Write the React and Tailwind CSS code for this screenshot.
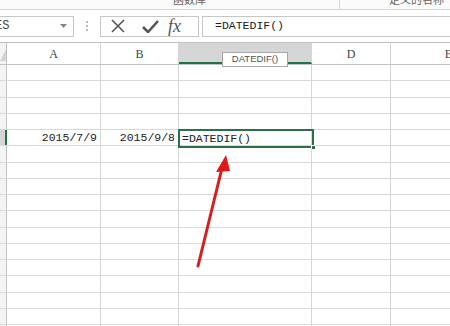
const cols = [
  { key: "A", w: "w-[94px]" },
  { key: "B", w: "w-[78px]" },
  { key: "C", w: "w-[133px]" },
  { key: "D", w: "w-[79px]" },
  { key: "E", w: "w-[116px]" },
];

const rows = Array.from({ length: 17 }, (_, i) => i);

const App = () => {
  return (
    <div className="relative w-[450px] h-[326px] overflow-hidden bg-white font-['Liberation_Sans',sans-serif]">
      {/* ribbon strip */}
      <div className="flex h-[10px] border-b border-[#d6d6d6] bg-[#fbfbfb] overflow-hidden text-[11px] text-[#666] font-['Noto_Sans_CJK_SC',sans-serif] leading-none">
        <div className="w-[340px] border-r border-[#d6d6d6] flex justify-center pl-[40px]">
          <span className="-mt-[6px]">函数库</span>
        </div>
        <div className="flex-1 flex justify-end pr-[6px]">
          <span className="-mt-[6px]">定义的名称</span>
        </div>
      </div>

      {/* formula bar */}
      <div className="flex items-center h-[32px] gap-0">
        <div className="w-[74px] h-[21px] border border-l-0 border-[#c6c6c6] flex items-center overflow-hidden">
          <span className="-ml-[5px] text-[12px] text-[#444] font-['Liberation_Mono',monospace]">ES</span>
          <svg className="ml-auto mr-[6px]" width="7" height="5" viewBox="0 0 7 5">
            <path d="M0 0 L7 0 L3.5 4 Z" fill="#888" />
          </svg>
        </div>
        <div className="w-[26px] flex justify-center">
          <div className="flex flex-col gap-[2px]">
            <span className="block w-[2px] h-[2px] bg-[#bbb]" />
            <span className="block w-[2px] h-[2px] bg-[#bbb]" />
            <span className="block w-[2px] h-[2px] bg-[#bbb]" />
          </div>
        </div>
        <div className="w-[99px] h-[21px] border border-[#c6c6c6] flex items-center">
          <svg className="ml-[10px]" width="14" height="14" viewBox="0 0 14 14">
            <path d="M1 1 L13 13 M13 1 L1 13" stroke="#555" strokeWidth="1.6" />
          </svg>
          <svg className="ml-[17px]" width="17" height="13" viewBox="0 0 17 13">
            <path d="M1 7 L6 12 L16 1" stroke="#555" strokeWidth="2.6" fill="none" />
          </svg>
          <span className="ml-[9px] text-[18px] italic text-[#555] font-['Liberation_Serif',serif] leading-none">fx</span>
        </div>
        <div className="ml-[3px] flex-1 h-[21px] border border-r-0 border-[#c6c6c6] flex items-center pl-[12px] text-[11.5px] text-[#222] font-['Liberation_Mono',monospace]">
          =DATEDIF()
        </div>
      </div>

      {/* header row */}
      <div className="flex h-[23px] border-y border-[#c2c2c2]">
        <div className="w-[7px] shrink-0 border-r border-[#c2c2c2] bg-[#f4f4f4] flex items-end pb-[3px]">
          <svg width="6" height="12" viewBox="0 0 6 12">
            <path d="M6 0 L6 12 L0 12 Z" fill="#d4d4d4" />
          </svg>
        </div>
        {cols.map((c) => (
          <div
            key={c.key}
            className={`${c.w} shrink-0 border-r border-[#d6d6d6] flex items-center justify-center text-[12px] text-[#444] font-['Liberation_Serif',serif] ${
              c.key === "C" ? "bg-[#d6d6d6] border-b-2 border-b-[#217346]" : "bg-white"
            }`}
          >
            {c.key === "C" ? "" : c.key}
          </div>
        ))}
      </div>

      {/* grid rows */}
      <div className="flex flex-col">
        {rows.map((r) => (
          <div key={r} className="flex h-[16.25px] border-b border-[#d9d9d9]">
            <div
              className={`w-[7px] shrink-0 border-r ${
                r === 4 ? "bg-[#d6d6d6] border-r-2 border-[#217346]" : "bg-[#f4f4f4] border-[#c2c2c2]"
              }`}
            />
            {cols.map((c) => (
              <div
                key={c.key}
                className={`${c.w} shrink-0 border-r border-[#d6d6d6] flex items-center justify-end pr-[3px] text-[11.5px] text-[#222] font-['Liberation_Mono',monospace] leading-none`}
              >
                {r === 4 && c.key === "A" && "2015/7/9"}
                {r === 4 && c.key === "B" && "2015/9/8"}
              </div>
            ))}
          </div>
        ))}
      </div>

      {/* function tooltip in header */}
      <div className="absolute left-[222px] top-[52px] w-[66px] h-[15px] border border-[#a8a8a8] bg-white flex items-center justify-center text-[9.5px] text-[#555]">
        DATEDIF()
      </div>

      {/* active cell */}
      <div className="absolute left-[178px] top-[129px] w-[136px] h-[19px] border-2 border-[#2e6e4a] flex items-center pl-[2px] text-[11.5px] text-[#222] font-['Liberation_Mono',monospace]">
        =DATEDIF()
        <span className="absolute -right-[4px] -bottom-[4px] w-[5px] h-[5px] bg-[#2e6e4a] border border-white" />
      </div>

      {/* red arrow */}
      <svg className="absolute left-0 top-0" width="450" height="326" viewBox="0 0 450 326">
        <path d="M198 266 L222 168" stroke="#d42020" strokeWidth="3" strokeLinecap="round" />
        <path d="M226 155 L216 172 L230 171 Z" fill="#e01818" />
      </svg>
    </div>
  );
};

export default App;
